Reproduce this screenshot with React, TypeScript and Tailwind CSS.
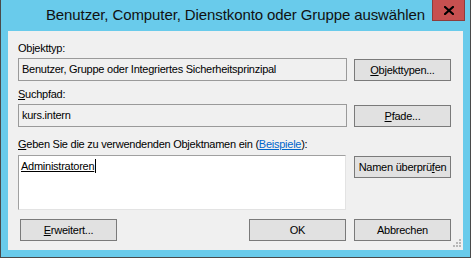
import React from "react";

const F = { fontFamily: '"Liberation Sans", Arial, sans-serif' };

function Btn({ children, className = "" }: { children: React.ReactNode; className?: string }) {
  return (
    <div
      className={`flex items-center justify-center bg-[#e1e1e1] border border-[#7a7a7a] text-[11px] text-black leading-[13px] ${className}`}
    >
      {children}
    </div>
  );
}

export default function App() {
  return (
    <div
      className="w-[471px] h-[258px] bg-[#69cbeb] border-l border-r border-b border-[#4a4a4a] flex flex-col overflow-hidden"
      style={F}
    >
      {/* title bar */}
      <div className="h-[31px] flex flex-row shrink-0">
        <div className="w-[38px] shrink-0" />
        <div className="flex-1 text-center text-[15px] leading-[20px] pt-[5px] text-[#111] tracking-[-0.1px]">
          Benutzer, Computer, Dienstkonto oder Gruppe auswählen
        </div>
        <div className="w-[33px] h-[21px] mr-[5px] bg-[#c75050] border border-[#8e3c3c] border-t-0 flex items-center justify-center shrink-0">
          <svg width="10" height="9" viewBox="0 0 10 9">
            <path d="M1 1 L9 8 M9 1 L1 8" stroke="#000" strokeWidth="2.2" strokeLinecap="square" />
          </svg>
        </div>
      </div>

      {/* client */}
      <div className="relative mx-[7px] h-[219px] bg-[#f0f0f0] flex flex-col pl-[10px] pr-[12px] pt-[11px] text-[11px] leading-[13px] text-black tracking-[-0.25px]">
        <div className="h-[13px]">Objekttyp:</div>
        <div className="flex flex-row gap-[7px] mt-[3px]">
          <div className="w-[329px] h-[23px] border border-[#9a9a9a] bg-[#f0f0f0] pl-[3px] flex items-center">
            Benutzer, Gruppe oder Integriertes Sicherheitsprinzipal
          </div>
          <Btn className="w-[97px] h-[22px] mt-[1px]">
            <span>
              <span className="underline">O</span>bjekttypen...
            </span>
          </Btn>
        </div>

        <div className="h-[13px] mt-[7px]">
          <span className="underline">S</span>uchpfad:
        </div>
        <div className="flex flex-row gap-[7px] mt-[3px]">
          <div className="w-[329px] h-[23px] border border-[#9a9a9a] bg-[#f0f0f0] pl-[3px] flex items-center">
            kurs.intern
          </div>
          <Btn className="w-[97px] h-[22px] mt-[1px]">
            <span>
              <span className="underline">P</span>fade...
            </span>
          </Btn>
        </div>

        <div className="h-[13px] mt-[11px]">
          <span className="underline">G</span>eben Sie die zu verwendenden Objektnamen ein (
          <span className="underline text-[#0066cc]">Beispiele</span>):
        </div>
        <div className="flex flex-row mt-[4px]">
          <div className="w-[328px] h-[55px] bg-white border-t border-l border-[#a0a0a0] border-r border-b border-r-[#e3e3e3] border-b-[#e3e3e3] pl-[2px] pt-[3px]">
            <span className="inline-flex items-stretch leading-[14px]">
              <span className="underline">Administratoren</span>
              <span className="w-[1px] bg-black ml-[1px]" />
            </span>
          </div>
          <Btn className="w-[97px] h-[22px] mt-[1px] ml-[8px] border-[#4e4e4e]">
            <span>
              Namen überprü<span className="underline">f</span>en
            </span>
          </Btn>
        </div>

        <div className="flex flex-row mt-[9px]">
          <Btn className="w-[97px] h-[22px] ml-[2px]">
            <span>
              <span className="underline">E</span>rweitert...
            </span>
          </Btn>
          <div className="flex-1" />
          <Btn className="w-[97px] h-[22px]">OK</Btn>
          <Btn className="w-[97px] h-[22px] ml-[8px]">Abbrechen</Btn>
        </div>

        {/* resize grip */}
        <svg className="absolute right-[2px] bottom-[2px]" width="10" height="10" viewBox="0 0 10 10">
          {[
            [8, 0],
            [5, 3],
            [8, 3],
            [2, 6],
            [5, 6],
            [8, 6],
          ].map(([x, y], i) => (
            <rect key={i} x={x} y={y + 1} width="2" height="2" fill="#b8b8b8" />
          ))}
        </svg>
      </div>
    </div>
  );
}
